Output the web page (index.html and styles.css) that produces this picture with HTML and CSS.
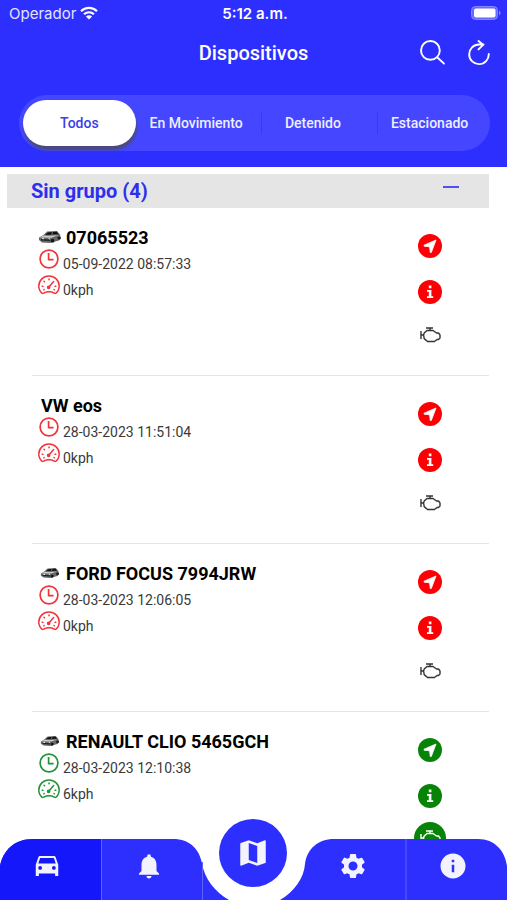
FILE: index.html
```html
<!DOCTYPE html>
<html lang="es">
<head>
<meta charset="utf-8">
<meta name="viewport" content="width=device-width, initial-scale=1">
<title>Dispositivos</title>
<link rel="stylesheet" href="styles.css">
</head>
<body>
<svg class="sprite" aria-hidden="true">
  <symbol id="clock" viewBox="0 0 22 22"><g fill="none" stroke="currentColor" stroke-width="1.7"><circle cx="11" cy="11" r="8.900"/><path d="M10.600 5v6.600h5"/></g></symbol>
  <symbol id="gauge" viewBox="0 0 22 22"><g fill="none" stroke="currentColor" stroke-width="1.500" stroke-linejoin="round" stroke-linecap="round"><path d="M4 19.200C2 17.500.8 14.700.8 12 .8 6.400 5.400 2 11 2s10.200 4.400 10.200 10c0 2.700-1.200 5.500-3.200 7.200-.5.400-1 .3-1.600 0-3.300-1.700-7.500-1.700-10.800 0-.6.300-1.100.4-1.600 0z"/><path d="M11 5v.8M6 7.200l.5.500M4.200 12.200h.8M17 12.200h.8M5.800 15.800l.4-.2M16 15.600l.4.200M10.800 13.200l4.800-5.600"/><circle cx="10.600" cy="13.300" r="1.100" fill="currentColor"/></g></symbol>
  <symbol id="arrow" viewBox="0 0 24 24"><circle cx="12" cy="12" r="12" fill="currentColor"/><path d="M18 6 6 11.200v1l5.600.6.700 5.700h1z" fill="#fff" stroke="#fff" stroke-width=".8" stroke-linejoin="round"/></symbol>
  <symbol id="info" viewBox="0 0 24 24"><circle cx="12" cy="12" r="12" fill="currentColor"/><path d="M10.800 5.600h2.600v2.600h-2.600zM9 10h4.400v6.200h1.800V18H9v-1.800h1.800v-4.400H9z" fill="#fff"/></symbol>
  <symbol id="engine" viewBox="0 0 24 18"><path d="M3 5v8M3 9h2.600l.6-2L9 4.500h6L18.500 7h2l1.500 2v3l-1.500 1.500H19l-2.500 2H9.500l-3.300-2.900L5.600 9M12 4.500V2M8 2h7" fill="none" stroke="currentColor" stroke-width="1.400" stroke-linejoin="round"/></symbol>
  <symbol id="car-photo" viewBox="0 0 24 14"><path d="M1 7.500 5.500 5 9 1.600 19 1l3 3.500 1 4-2 2-9 2.500-8-.6L1 10z" fill="#686868"/><path d="M7 5 10 2.400l4-.3-1 2.600zM15 2l3.500-.2 2 2.400-6 .4z" fill="#111"/><path d="m1.500 7.500 4-2 7 .3 8-.7-7 2.600z" fill="#c8c8c8"/><path d="m3 9 9 .6v1.500L3 10.500z" fill="#222"/><circle cx="14.500" cy="10.700" r="1.900" fill="#161616"/><circle cx="21" cy="8" r="1.600" fill="#161616"/><path d="m4 8.200 2 .1-.3 1-1.700-.2zM10 8.400l2-.2v1.200z" fill="#fff"/></symbol>
</svg>
<div class="app">
  <header class="header">
    <div class="status">
      <span class="carrier">Operador
        <svg class="wifi" viewBox="0 0 18 14" aria-hidden="true"><g fill="none" stroke="#fff" stroke-width="2.200"><path d="M1 5.200c4.500-4.300 11.500-4.300 16 0M4 8.300c2.900-2.700 7.100-2.700 10 0"/></g><path d="M9 13.500 5.900 10.400c1.800-1.500 4.400-1.500 6.200 0z" fill="#fff"/></svg>
      </span>
      <span class="time">5:12 a.m.</span>
      <svg class="battery" viewBox="0 0 30 14" aria-hidden="true"><rect x=".5" y=".5" width="26" height="13" rx="4" fill="#6668ff" stroke="#8587ff"/><rect x="3" y="2.500" width="21.500" height="9" rx="2" fill="#fff"/><path d="M28 4.500c2 .8 2 4.200 0 5z" fill="#8587ff"/></svg>
    </div>
    <div class="titlebar">
      <h1>Dispositivos</h1>
      <button class="tool" type="button" aria-label="Buscar"><svg viewBox="0 0 26 26"><g fill="none" stroke="#fff" stroke-width="1.900" stroke-linecap="round"><circle cx="10.400" cy="10.400" r="9.400"/><path d="m17.200 17.200 6.800 6.400"/></g></svg></button>
      <button class="tool" type="button" aria-label="Actualizar"><svg viewBox="0 0 26 26"><g fill="none" stroke="#fff" stroke-width="1.900" stroke-linecap="round" stroke-linejoin="round"><path d="M22.800 14A9.800 9.800 0 1 1 13 4.500h4.500M12.500 1l4.600 3.800-4.600 4.600"/></g></svg></button>
    </div>
    <div class="tabs">
      <button class="tab selected" type="button">Todos</button>
      <button class="tab" type="button">En Movimiento</button>
      <button class="tab divided" type="button">Detenido</button>
      <button class="tab divided" type="button">Estacionado</button>
    </div>
  </header>

  <main class="content">
    <button class="group" type="button" aria-expanded="true"><span>Sin grupo (4)</span><span class="minus"></span></button>
    <ul class="devices">
      <li class="device stopped">
        <div class="details">
          <h2><svg class="photo"><use href="#car-photo"/></svg>07065523</h2>
          <p><svg class="mark"><use href="#clock"/></svg><span>05-09-2022 08:57:33</span></p>
          <p><svg class="mark"><use href="#gauge"/></svg><span>0kph</span></p>
        </div>
        <div class="actions">
          <button type="button" aria-label="Ubicar"><svg class="round"><use href="#arrow"/></svg></button>
          <button type="button" aria-label="Información"><svg class="round"><use href="#info"/></svg></button>
          <button class="motor" type="button" aria-label="Motor"><svg><use href="#engine"/></svg></button>
        </div>
      </li>
      <li class="device stopped">
        <div class="details">
          <h2 class="plain">VW eos</h2>
          <p><svg class="mark"><use href="#clock"/></svg><span>28-03-2023 11:51:04</span></p>
          <p><svg class="mark"><use href="#gauge"/></svg><span>0kph</span></p>
        </div>
        <div class="actions">
          <button type="button" aria-label="Ubicar"><svg class="round"><use href="#arrow"/></svg></button>
          <button type="button" aria-label="Información"><svg class="round"><use href="#info"/></svg></button>
          <button class="motor" type="button" aria-label="Motor"><svg><use href="#engine"/></svg></button>
        </div>
      </li>
      <li class="device stopped">
        <div class="details">
          <h2><svg class="photo small"><use href="#car-photo"/></svg>FORD FOCUS 7994JRW</h2>
          <p><svg class="mark"><use href="#clock"/></svg><span>28-03-2023 12:06:05</span></p>
          <p><svg class="mark"><use href="#gauge"/></svg><span>0kph</span></p>
        </div>
        <div class="actions">
          <button type="button" aria-label="Ubicar"><svg class="round"><use href="#arrow"/></svg></button>
          <button type="button" aria-label="Información"><svg class="round"><use href="#info"/></svg></button>
          <button class="motor" type="button" aria-label="Motor"><svg><use href="#engine"/></svg></button>
        </div>
      </li>
      <li class="device moving">
        <div class="details">
          <h2><svg class="photo small"><use href="#car-photo"/></svg>RENAULT CLIO 5465GCH</h2>
          <p><svg class="mark"><use href="#clock"/></svg><span>28-03-2023 12:10:38</span></p>
          <p><svg class="mark"><use href="#gauge"/></svg><span>6kph</span></p>
        </div>
        <div class="actions">
          <button type="button" aria-label="Ubicar"><svg class="round"><use href="#arrow"/></svg></button>
          <button type="button" aria-label="Información"><svg class="round"><use href="#info"/></svg></button>
          <button class="motor" type="button" aria-label="Motor"><svg><use href="#engine"/></svg></button>
        </div>
      </li>
    </ul>
  </main>

  <nav class="nav" aria-label="Principal">
    <svg class="nav-shape" viewBox="0 0 507 61" preserveAspectRatio="none" aria-hidden="true">
      <path d="M0 61V27C3 11 15 0 33 0h140c17 0 26 10 29 24 2 15 13 29 27 37z" fill="#2d2fff"/>
      <path d="M0 61V27C3 11 15 0 33 0h68v61z" fill="#1417fa"/>
      <path d="M280 61c14-8 24-22 25-36 2-15 13-25 29-25h144c17 0 27 12 29 27v34z" fill="#2d2fff"/>
      <path d="M101.500 0v61M202.500 23v38M406 0v61" stroke="#6264ff" stroke-width="1"/>
    </svg>
    <a href="#dispositivos" aria-label="Dispositivos"><svg viewBox="0 0 24 24"><path fill-rule="evenodd" d="M18.920 5.010C18.720 4.420 18.160 4 17.500 4h-11c-.66 0-1.210.42-1.420 1.010L3 11v9h2.500v-2h13v2H21v-9zM6.500 15a1.500 1.500 0 1 1 0-3 1.500 1.500 0 0 1 0 3zm11 0a1.500 1.500 0 1 1 0-3 1.500 1.500 0 0 1 0 3zM5 10l1.500-4.500h11L19 10z"/></svg></a>
    <a href="#avisos" aria-label="Avisos"><svg viewBox="0 0 24 24"><path d="M12 22c1.100 0 2-.9 2-2h-4c0 1.100.9 2 2 2zm6-6v-5c0-3.070-1.640-5.640-4.500-6.320V4c0-.83-.67-1.500-1.500-1.500s-1.500.67-1.500 1.500v.68C7.630 5.360 6 7.920 6 11v5l-2 2v1h16v-1z"/></svg></a>
    <a class="center" href="#mapa" aria-label="Mapa"><svg viewBox="0 0 24 24"><path fill-rule="evenodd" d="m20.500 3-.16.03L15 5.100 9 3 3.360 4.900c-.21.070-.36.250-.36.480V20.500c0 .28.220.5.500.5l.16-.03L9 18.900l6 2.100 5.640-1.900c.21-.07.36-.25.36-.48V3.500c0-.28-.22-.5-.5-.5zM15 19l-6-2.110V5l6 2.110z"/></svg></a>
    <a href="#ajustes" aria-label="Ajustes"><svg viewBox="0 0 24 24"><path fill-rule="evenodd" d="m19.140 12.940c.04-.3.060-.61.060-.94s-.02-.64-.07-.94l2.030-1.580c.18-.14.23-.41.120-.61l-1.920-3.320c-.12-.22-.37-.29-.59-.22l-2.390.96c-.5-.38-1.030-.7-1.620-.94l-.36-2.540c-.04-.24-.24-.41-.48-.41h-3.840c-.24 0-.43.170-.47.410l-.36 2.540c-.59.240-1.130.570-1.620.940l-2.390-.96c-.22-.08-.47 0-.59.220L2.740 8.870c-.12.210-.08.470.12.610l2.030 1.580c-.05.3-.09.630-.09.940s.02.640.07.940l-2.030 1.580c-.18.140-.23.410-.12.610l1.920 3.320c.12.220.37.290.59.220l2.390-.96c.5.380 1.030.7 1.620.94l.36 2.540c.05.240.24.410.48.410h3.840c.24 0 .44-.17.470-.41l.36-2.540c.59-.24 1.130-.56 1.620-.94l2.390.96c.22.080.47 0 .59-.22l1.920-3.320c.12-.22.070-.47-.12-.61zM12 15.600a3.600 3.600 0 1 1 0-7.200 3.600 3.600 0 0 1 0 7.200z"/></svg></a>
    <a href="#informacion" aria-label="Información"><svg viewBox="0 0 24 24"><path fill-rule="evenodd" d="M12 2a10 10 0 1 0 0 20 10 10 0 0 0 0-20zm1 15h-2v-6h2zm0-8h-2V7h2z"/></svg></a>
  </nav>
</div>
</body>
</html>
```
FILE: styles.css
```css
* { box-sizing: border-box; }
body, h1, h2, p, ul { margin: 0; padding: 0; }
body { font-family: Roboto, "Liberation Sans", sans-serif; background: #fff; color: #000; }
button { border: 0; padding: 0; background: none; color: inherit; font: inherit; }
svg { display: block; }
.sprite { position: absolute; width: 0; height: 0; }

.app { position: relative; z-index: 0; height: 100vh; display: flex; flex-direction: column; overflow: hidden; }

.header { flex: none; background: #2d2fff; color: #fff; padding-bottom: 16px; }
.status { display: grid; grid-template-columns: 1fr auto 1fr; align-items: center; height: 26px; padding: 0 6px 0 9px; font-family: Inter, sans-serif; font-size: 15px; }
.carrier { display: flex; align-items: center; gap: 4px; color: #e3e4ff; }
.wifi { width: 18px; height: 14px; }
.time { font-weight: 600; }
.battery { width: 30px; height: 14px; justify-self: end; }

.titlebar { display: flex; align-items: center; gap: 20px; height: 54px; padding-right: 15px; }
.titlebar h1 { flex: 1; padding-left: 107px; text-align: center; font-size: 20px; font-weight: 500; }
.tool svg { width: 26px; height: 26px; }

.tabs { display: grid; grid-template-columns: repeat(4, 1fr); height: 56px; margin: 15px 17px 0 19px; padding: 5px 0 5px 4px; border-radius: 28px; background: #4447ff; }
.tab { padding-right: 4px; font-size: 14px; font-weight: 500; color: #eeeeff; }
.tab.selected { margin-right: 4px; padding: 0; border-radius: 24px; background: #fff; color: #3c3ee8; box-shadow: 1px 4px 3px #4b4b78; }
.tab.divided { background: linear-gradient(#393cee, #393cee) 4px center / 1px 22px no-repeat; }

.content { flex: 1; min-height: 0; overflow: hidden; padding: 7px 18px 0 7px; }
.group { display: flex; justify-content: space-between; width: 100%; height: 34px; padding: 0 30px 0 24px; background: #e5e5e5; color: #2d2fee; font-size: 20px; font-weight: 700; line-height: 35px; }
.minus { width: 16px; height: 2px; margin-top: 12px; background: #5052e8; }

.devices { list-style: none; margin-left: 25px; }
.device { display: flex; justify-content: space-between; height: 168px; border-bottom: 1px solid #e4e4e4; }
.device:last-child { border-bottom: 0; }
.details { padding: 17px 0 0 6px; }
.details h2 { display: flex; align-items: center; height: 24px; font-size: 18px; font-weight: 700; }
.details h2.plain { padding-left: 3px; }
.details p { display: flex; height: 26px; gap: 3px; font-size: 14px; line-height: 31px; color: #3a3a3a; }
.mark { width: 22px; height: 22px; margin-top: -1px; }
.photo { width: 24px; height: 14px; margin-right: 4px; }
.photo.small { width: 20px; height: 12px; margin: 0 6px 0 2px; }
.stopped .mark { color: #f0353b; }
.moving .mark { color: #249238; }

.actions { display: flex; flex-direction: column; align-items: center; gap: 22px; width: 32px; margin-right: 43px; padding-top: 26px; }
.round { width: 24px; height: 24px; }
.stopped .round { color: #fc0006; }
.moving .round { color: #078407; }
.motor { color: #333; }
.motor svg { width: 24px; height: 18px; }
.moving .motor { flex: none; display: grid; place-items: center; width: 32px; height: 32px; margin-top: -8px; border-radius: 50%; background: #078407; color: #fff; }

.nav { position: fixed; left: 0; right: 0; bottom: 0; height: 61px; display: grid; grid-template-columns: repeat(5, 1fr); justify-items: center; align-items: start; }
.nav-shape { position: absolute; z-index: -1; inset: 0; width: 100%; height: 100%; }
.nav a { display: grid; place-items: center; margin-top: 12px; }
.nav a:nth-of-type(1), .nav a:nth-of-type(2) { margin-right: 7px; }
.nav a:nth-of-type(4) { margin-right: 4px; }
.nav a:nth-of-type(5) { margin-right: 6px; }
.nav svg { fill: #f2f3ff; }
.nav a svg { width: 30px; height: 30px; }
.nav .center { width: 68px; height: 68px; margin-top: -20px; border-radius: 50%; background: #2d2fff; }
.nav .center svg { width: 34px; height: 34px; }
```
